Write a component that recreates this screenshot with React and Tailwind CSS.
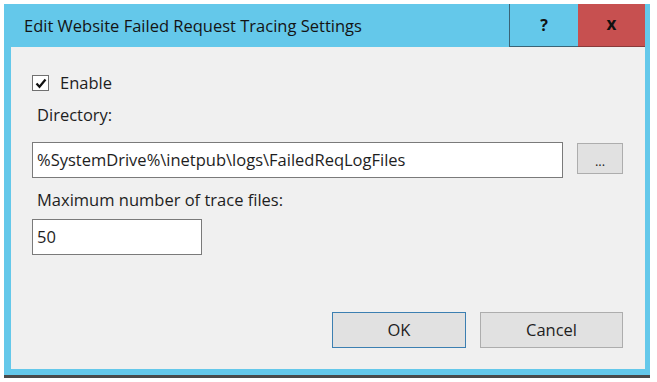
export default function App() {
    return <div className="bg-white h-[382px] w-[657px] pt-[4px] pl-[4px]" style={{ fontFamily: '"Open Sans", "Noto Sans", sans-serif' }}>
        <div className="w-[646px] h-[371px] bg-[#64c8ea] flex flex-col shadow-[0_3px_0_#4a4a4a]">
            <TitleBar />
            <div className="ml-[7px] mr-[5px] h-[322px] bg-[#f0f0f0] text-[#1e1e1e] text-[16.5px] pl-[21px] flex flex-col">
                <label className="mt-[28px] h-[16px] flex items-center gap-[10px]">
                    <span className="w-[17px] h-[16px] bg-white border border-[#707070] flex items-center justify-center">
                        <svg width="12" height="11" viewBox="0 0 12 11">
                            <path d="M1.5 5.5 L4.5 8.8 L10.5 1.5" fill="none" stroke="#111" strokeWidth="2.2" />
                        </svg>
                    </span>
                    <span className="pl-[1px]">Enable</span>
                </label>
                <div className="mt-[13px] h-[22px] leading-[22px] pl-[5px]">Directory:</div>
                <div className="mt-[16px] flex items-start">
                    <div className="w-[531px] h-[36px] bg-white border border-[#7a7a7a] pl-[4px] flex items-center">
                        %SystemDrive%\inetpub\logs\FailedReqLogFiles
                    </div>
                    <button className="ml-[14px] mt-[1px] w-[46px] h-[31px] bg-[#e1e1e1] border border-[#adadad] text-[13px] leading-none pt-[6px]">...</button>
                </div>
                <div className="mt-[11px] h-[22px] leading-[22px] pl-[5px]">Maximum number of trace files:</div>
                <div className="mt-[8px] w-[170px] h-[36px] bg-white border border-[#7a7a7a] pl-[4px] flex items-center">50</div>
                <div className="mt-[57px] flex gap-[14px] pl-[300px]">
                    <button className="w-[134px] h-[36px] bg-[#e1e1e1] border border-[#3c7fb1]">OK</button>
                    <button className="w-[143px] h-[36px] bg-[#e1e1e1] border border-[#adadad]">Cancel</button>
                </div>
            </div>
        </div>
    </div>
}

function TitleBar() {
    return <div className="h-[43px] flex">
        <div className="flex-1 pl-[20px] pt-[10px] text-[16.5px] text-[#141414]">Edit Website Failed Request Tracing Settings</div>
        <div className="w-[69px] h-[43px] border-l border-b border-[#3b6476] flex items-center justify-center font-bold text-[16px] text-[#111]">?</div>
        <div className="w-[67px] h-[43px] mr-[5px] bg-[#c75050] border-b border-[#8a3a3a] flex items-center justify-center font-bold text-[17px] text-[#111] pb-[2px]">x</div>
    </div>
}
